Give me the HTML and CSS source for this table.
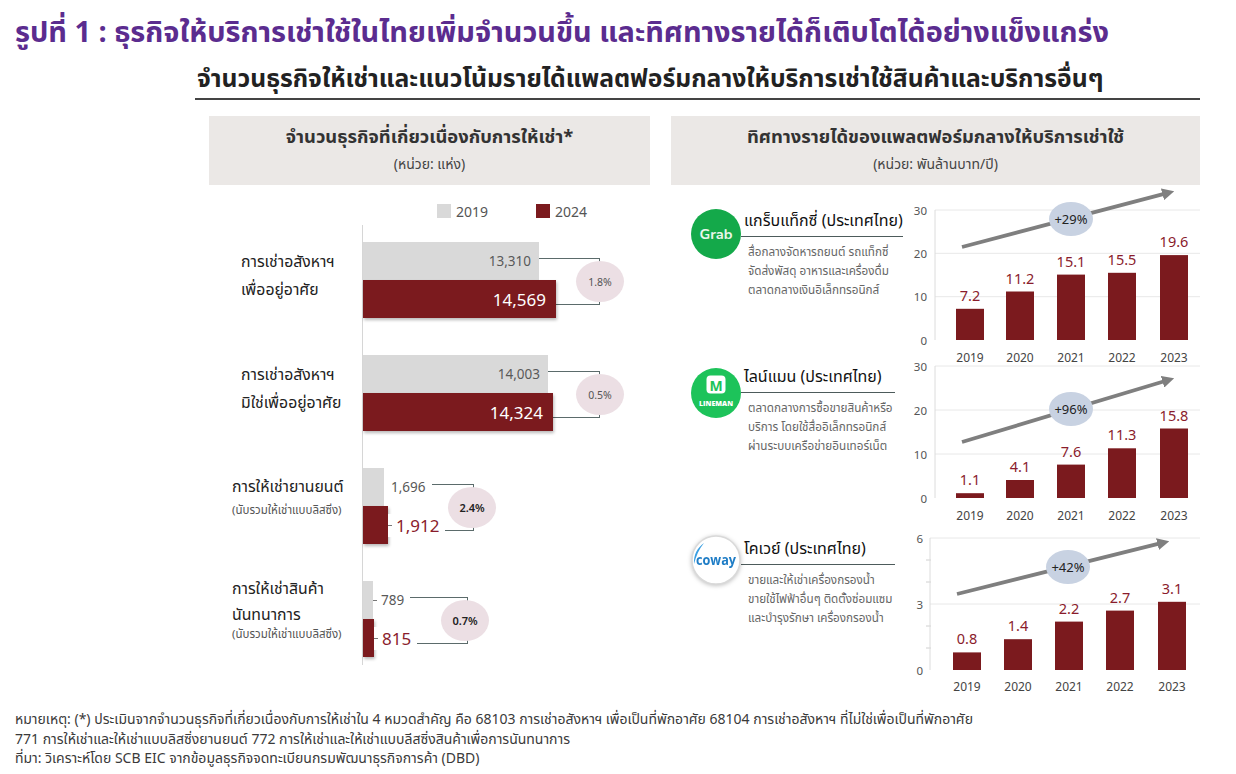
FILE: index.html
```
<!DOCTYPE html>
<html lang="th">
<head>
<meta charset="utf-8">
<title>รูปที่ 1</title>
<link rel="stylesheet" href="styles.css">
</head>
<body>
<div class="page">
  <h1 class="title">รูปที่ 1 : ธุรกิจให้บริการเช่าใช้ในไทยเพิ่มจำนวนขึ้น และทิศทางรายได้ก็เติบโตได้อย่างแข็งแกร่ง</h1>
  <div class="subhead"><h2>จำนวนธุรกิจให้เช่าและแนวโน้มรายได้แพลตฟอร์มกลางให้บริการเช่าใช้สินค้าและบริการอื่นๆ</h2></div>

  <div class="panels">
    <section class="panel left">
      <div class="phead">
        <div class="ph-title">จำนวนธุรกิจที่เกี่ยวเนื่องกับการให้เช่า*</div>
        <div class="ph-unit">(หน่วย: แห่ง)</div>
      </div>
      <div class="legend">
        <div class="lg-item first"><span class="sw sw19"></span>2019</div>
        <div class="lg-item"><span class="sw sw24"></span>2024</div>
      </div>
      <div class="hchart">
        <div class="hlabels">
          <div class="lab lab-a"><div class="lm">การเช่าอสังหาฯ</div><div class="lm">เพื่ออยู่อาศัย</div></div>
          <div class="lab lab-a"><div class="lm">การเช่าอสังหาฯ</div><div class="lm">มิใช่เพื่ออยู่อาศัย</div></div>
          <div class="lab lab-b"><div class="lm">การให้เช่ายานยนต์</div><div class="ls">(นับรวมให้เช่าแบบลิสซิ่ง)</div></div>
          <div class="lab lab-c"><div class="lm">การให้เช่าสินค้า</div><div class="lm">นันทนาการ</div><div class="ls">(นับรวมให้เช่าแบบลิสซิ่ง)</div></div>
        </div>
        <div class="hbars">
          <div class="grp">
            <div class="brow"><div class="bar b19" style="width:176px"><span class="vin g">13,310</span></div></div>
            <div class="brow"><div class="bar b24" style="width:193px"><span class="vin w">14,569</span></div></div>
            <div class="bracket" style="left:175px;width:62px"></div>
            <div class="pct" style="left:213px">1.8%</div>
          </div>
          <div class="grp">
            <div class="brow"><div class="bar b19" style="width:185px"><span class="vin g">14,003</span></div></div>
            <div class="brow"><div class="bar b24" style="width:190px"><span class="vin w">14,324</span></div></div>
            <div class="bracket" style="left:184px;width:53px"></div>
            <div class="pct" style="left:213px">0.5%</div>
          </div>
          <div class="grp">
            <div class="brow"><div class="bar b19" style="width:21px"></div><span class="vout g">1,696</span></div>
            <div class="brow"><div class="bar b24" style="width:25px"></div><span class="vout r tick">1,912</span></div>
            <div class="bracket" style="left:64px;width:47px"></div>
            <div class="pct strong" style="left:85px">2.4%</div>
          </div>
          <div class="grp last">
            <div class="brow"><div class="bar b19" style="width:10px"></div><span class="vout g tick">789</span></div>
            <div class="brow"><div class="bar b24" style="width:11px"></div><span class="vout r tick">815</span></div>
            <div class="bracket" style="left:44px;width:61px"></div>
            <div class="pct strong" style="left:78px">0.7%</div>
          </div>
        </div>
      </div>
    </section>

    <section class="panel right">
      <div class="phead">
        <div class="ph-title">ทิศทางรายได้ของแพลตฟอร์มกลางให้บริการเช่าใช้</div>
        <div class="ph-unit">(หน่วย: พันล้านบาท/ปี)</div>
      </div>
      <div class="rows">
        <div class="rrow r1">
          <div class="info">
            <svg class="logo" viewBox="0 0 50 50" width="50" height="50">
              <circle cx="25" cy="25" r="25" fill="#14a94a"/>
              <text x="25" y="29.5" text-anchor="middle" font-family="Nunito, 'Open Sans', sans-serif" font-size="13" font-weight="700" fill="#e9f7ea" textLength="33" lengthAdjust="spacingAndGlyphs">Grab</text>
            </svg>
            <div class="itext">
              <div class="iname">แกร็บแท็กซี่ (ประเทศไทย)</div>
              <div class="idesc">สื่อกลางจัดหารถยนต์ รถแท็กซี่<br>จัดส่งพัสดุ อาหารและเครื่องดื่ม<br>ตลาดกลางเงินอิเล็กทรอนิกส์</div>
            </div>
          </div>
          <svg class="vchart" width="300" height="156" viewBox="0 0 300 156">
            <defs><marker id="ah1" viewBox="0 0 10 10" refX="3" refY="5" markerWidth="3.2" markerHeight="3.2" orient="auto"><path d="M0,0 L10,5 L0,10 z" fill="#7f7f7f"/></marker></defs>
            <g class="grid"><line x1="35" y1="10" x2="300" y2="10"/><line x1="35" y1="53.3" x2="300" y2="53.3"/><line x1="35" y1="96.7" x2="300" y2="96.7"/></g>
            <line class="axis" x1="35" y1="10" x2="35" y2="140"/>
            <g class="ylab"><text x="27" y="14.5">30</text><text x="27" y="57.8">20</text><text x="27" y="101.2">10</text><text x="27" y="144.5">0</text></g>
            <g class="bars"><rect x="56" y="108.8" width="28" height="31.2"/><rect x="106" y="91.5" width="28" height="48.5"/><rect x="157" y="74.6" width="28" height="65.4"/><rect x="208" y="72.8" width="28" height="67.2"/><rect x="260" y="55.1" width="28" height="84.9"/></g>
            <g class="vals"><text x="70" y="100.8">7.2</text><text x="120" y="83.5">11.2</text><text x="171" y="66.6">15.1</text><text x="222" y="64.8">15.5</text><text x="274" y="47.1">19.6</text></g>
            <g class="years"><text x="70" y="162">2019</text><text x="120" y="162">2020</text><text x="171" y="162">2021</text><text x="222" y="162">2022</text><text x="274" y="162">2023</text></g>
            <line class="arrow" x1="62" y1="47" x2="266" y2="-6.6" marker-end="url(#ah1)"/>
            <ellipse class="bub" cx="171" cy="19" rx="22" ry="17"/>
            <text class="bubt" x="171" y="23.5">+29%</text>
          </svg>
        </div>

        <div class="rrow r2">
          <div class="info">
            <svg class="logo" viewBox="0 0 50 50" width="50" height="50">
              <circle cx="25" cy="25" r="25" fill="#1dc35a"/>
              <rect x="15.5" y="7.5" width="19" height="18" rx="4" fill="#ffffff"/>
              <text x="25" y="22.5" text-anchor="middle" font-family="'Open Sans', sans-serif" font-size="14" font-weight="700" fill="#1dc35a">M</text>
              <text x="25" y="37.5" text-anchor="middle" font-family="'Open Sans', sans-serif" font-size="6.4" font-weight="800" fill="#ffffff" textLength="34" lengthAdjust="spacingAndGlyphs">LINEMAN</text>
            </svg>
            <div class="itext">
              <div class="iname">ไลน์แมน (ประเทศไทย)</div>
              <div class="idesc">ตลาดกลางการซื้อขายสินค้าหรือ<br>บริการ โดยใช้สื่ออิเล็กทรอนิกส์<br>ผ่านระบบเครือข่ายอินเทอร์เน็ต</div>
            </div>
          </div>
          <svg class="vchart" width="300" height="172" viewBox="0 0 300 172">
            <defs><marker id="ah2" viewBox="0 0 10 10" refX="3" refY="5" markerWidth="3.2" markerHeight="3.2" orient="auto"><path d="M0,0 L10,5 L0,10 z" fill="#7f7f7f"/></marker></defs>
            <g class="grid"><line x1="35" y1="10" x2="300" y2="10"/><line x1="35" y1="54" x2="300" y2="54"/><line x1="35" y1="98" x2="300" y2="98"/></g>
            <line class="axis" x1="35" y1="10" x2="35" y2="142"/>
            <g class="ylab"><text x="27" y="14.5">30</text><text x="27" y="58.5">20</text><text x="27" y="102.5">10</text><text x="27" y="146.5">0</text></g>
            <g class="bars"><rect x="56" y="137.2" width="28" height="4.8"/><rect x="106" y="124" width="28" height="18"/><rect x="157" y="108.6" width="28" height="33.4"/><rect x="208" y="92.3" width="28" height="49.7"/><rect x="260" y="72.5" width="28" height="69.5"/></g>
            <g class="vals"><text x="70" y="129.2">1.1</text><text x="120" y="116">4.1</text><text x="171" y="100.6">7.6</text><text x="222" y="84.3">11.3</text><text x="274" y="64.5">15.8</text></g>
            <g class="years"><text x="70" y="164">2019</text><text x="120" y="164">2020</text><text x="171" y="164">2021</text><text x="222" y="164">2022</text><text x="274" y="164">2023</text></g>
            <line class="arrow" x1="62" y1="86" x2="266" y2="24.7" marker-end="url(#ah2)"/>
            <ellipse class="bub" cx="171" cy="53" rx="22" ry="17"/>
            <text class="bubt" x="171" y="57.5">+96%</text>
          </svg>
        </div>

        <div class="rrow r3">
          <div class="info">
            <svg class="logo" viewBox="0 0 50 50" width="50" height="50">
              <circle cx="25" cy="25" r="24" fill="#ffffff" stroke="#d9d9d9" stroke-width="1.5"/>
              <path d="M13 8 C6 13 2.5 20 3 29 C5 21 8 14 13 8 Z" fill="#3a9fe2"/>
              <text x="25" y="30" text-anchor="middle" font-family="'Open Sans', sans-serif" font-size="14" font-weight="700" fill="#1f7dc6" textLength="40" lengthAdjust="spacingAndGlyphs">coway</text>
            </svg>
            <div class="itext">
              <div class="iname">โคเวย์ (ประเทศไทย)</div>
              <div class="idesc">ขายและให้เช่าเครื่องกรองน้ำ<br>ขายใช้ไฟฟ้าอื่นๆ ติดตั้งซ่อมแซม<br>และบำรุงรักษา เครื่องกรองน้ำ</div>
            </div>
          </div>
          <svg class="vchart" width="300" height="172" viewBox="0 0 300 172">
            <defs><marker id="ah3" viewBox="0 0 10 10" refX="3" refY="5" markerWidth="3.2" markerHeight="3.2" orient="auto"><path d="M0,0 L10,5 L0,10 z" fill="#7f7f7f"/></marker></defs>
            <g class="grid"><line x1="30" y1="10" x2="300" y2="10"/><line x1="30" y1="76" x2="300" y2="76"/></g>
            <g class="ticks"><line x1="26" y1="32" x2="31" y2="32"/><line x1="26" y1="54" x2="31" y2="54"/><line x1="26" y1="98" x2="31" y2="98"/><line x1="26" y1="120" x2="31" y2="120"/></g>
            <line class="axis" x1="30" y1="10" x2="30" y2="142"/>
            <g class="ylab"><text x="23" y="14.5">6</text><text x="23" y="80.5">3</text><text x="23" y="146.5">0</text></g>
            <g class="bars"><rect x="53" y="124.4" width="28" height="17.6"/><rect x="104" y="111.2" width="28" height="30.8"/><rect x="155" y="93.6" width="28" height="48.4"/><rect x="206" y="82.6" width="28" height="59.4"/><rect x="258" y="73.8" width="28" height="68.2"/></g>
            <g class="vals"><text x="67" y="116.4">0.8</text><text x="118" y="103.2">1.4</text><text x="169" y="85.6">2.2</text><text x="220" y="74.6">2.7</text><text x="272" y="65.8">3.1</text></g>
            <g class="years"><text x="67" y="163">2019</text><text x="118" y="163">2020</text><text x="169" y="163">2021</text><text x="220" y="163">2022</text><text x="272" y="163">2023</text></g>
            <line class="arrow" x1="57" y1="66" x2="261" y2="15.2" marker-end="url(#ah3)"/>
            <ellipse class="bub" cx="168" cy="39" rx="22" ry="17"/>
            <text class="bubt" x="168" y="43.5">+42%</text>
          </svg>
        </div>
      </div>
    </section>
  </div>

  <footer class="notes">
    <p>หมายเหตุ: (*) ประเมินจากจำนวนธุรกิจที่เกี่ยวเนื่องกับการให้เช่าใน 4 หมวดสำคัญ คือ 68103 การเช่าอสังหาฯ เพื่อเป็นที่พักอาศัย 68104 การเช่าอสังหาฯ ที่ไม่ใช่เพื่อเป็นที่พักอาศัย</p>
    <p>771 การให้เช่าและให้เช่าแบบลิสซิ่งยานยนต์ 772 การให้เช่าและให้เช่าแบบลีสซิ่งสินค้าเพื่อการนันทนาการ</p>
    <p>ที่มา: วิเคราะห์โดย SCB EIC จากข้อมูลธุรกิจจดทะเบียนกรมพัฒนาธุรกิจการค้า (DBD)</p>
  </footer>
</div>
</body>
</html>
```

FILE: styles.css
```
* { box-sizing: border-box; }
html, body { margin: 0; padding: 0; background: #ffffff; }
body {
  font-family: "Noto Sans Thai", "Noto Sans Thai Looped", "Noto Sans", "DejaVu Sans", sans-serif;
  color: #222;
}
.page { width: 1236px; height: 774px; overflow: hidden; }

.title {
  margin: 0;
  padding: 14px 0 0 15px;
  font-size: 28.9px;
  line-height: 38px;
  font-weight: 700;
  color: #5b2c8f;
  white-space: nowrap;
}
.subhead {
  margin: 10px 0 0 195px;
  width: 1005px;
  border-bottom: 2px solid #444;
}
.subhead h2 {
  margin: 0;
  padding-left: 2px;
  font-size: 24.7px;
  line-height: 36px;
  font-weight: 700;
  color: #222;
  white-space: nowrap;
}

.panels { display: flex; gap: 21px; margin: 16px 0 0 209px; height: 584px; }
.left { width: 441px; }
.right { width: 529px; }

.phead { background: #ebe8e6; height: 69px; text-align: center; padding-top: 9px; }
.ph-title { font-size: 18.4px; line-height: 24px; font-weight: 700; color: #333; white-space: nowrap; }
.ph-unit { font-size: 14px; line-height: 18px; margin-top: 7px; color: #444; }

/* legend */
.legend { display: flex; align-items: center; height: 40px; padding: 12px 0 0 228px; }
.lg-item { display: flex; align-items: center; gap: 5px; font-family: "Noto Sans", sans-serif; font-size: 14px; color: #555; }
.lg-item.first { width: 99px; }
.sw { width: 14px; height: 14px; display: inline-block; }
.sw19 { background: #d9d9d9; }
.sw24 { background: #7b1a1e; }

/* horizontal bar chart */
.hchart { display: flex; height: 440px; }
.hlabels { width: 153px; padding-top: 17px; }
.lab { height: 113px; }
.lab-a { padding: 6px 0 0 32px; }
.lab-b { padding: 5px 0 0 23px; }
.lab-c { padding: 0 0 0 23px; margin-top: -5px; }
.lm { font-size: 15.8px; line-height: 28px; color: #222; white-space: nowrap; }
.lab-c .lm { line-height: 26px; }
.ls { font-size: 11.5px; line-height: 20px; color: #555; white-space: nowrap; }
.lab-c .ls { line-height: 14px; }

.hbars { flex: 1; border-left: 1px solid #d6d6d6; padding-top: 17px; }
.grp { height: 113px; position: relative; }
.grp.last { height: 85px; }
.brow { display: flex; align-items: center; height: 38px; position: relative; z-index: 2; }
.bar { height: 38px; display: flex; align-items: center; justify-content: flex-end; flex-shrink: 0; }
.b19 { background: #d9d9d9; }
.b24 { background: #7b1a1e; box-shadow: 1px 2px 3px rgba(0,0,0,0.28); }
.vin { font-family: "Noto Sans", sans-serif; padding-right: 8px; white-space: nowrap; }
.vin.g { font-size: 13.5px; color: #595959; }
.vin.w { font-size: 17px; color: #ffffff; padding-right: 10px; }
.vout { font-family: "Noto Sans", sans-serif; background: #fff; padding: 0 6px 0 7px; white-space: nowrap; display: flex; align-items: center; }
.vout.g { font-size: 13.5px; color: #595959; }
.vout.r { font-size: 17px; color: #8a1c2c; }
.vout.tick { padding-left: 0; }
.vout.tick::before { content: ""; width: 4px; height: 1px; background: #777; margin-right: 4px; }

.bracket {
  position: absolute;
  top: 16px;
  height: 47px;
  border: 1.5px solid #5b6b6b;
  border-left: none;
  z-index: 1;
}
.pct {
  position: absolute;
  top: 19px;
  width: 48px;
  height: 41px;
  border-radius: 50%;
  background: #ecdfe4;
  z-index: 3;
  display: flex;
  align-items: center;
  justify-content: center;
  font-family: "Noto Sans", sans-serif;
  font-size: 10.5px;
  color: #555;
}
.pct.strong { color: #222; font-weight: 600; font-size: 11px; }

/* right side */
.rows { margin-top: 15px; }
.rrow { display: flex; }
.r1 { height: 156px; }
.r2, .r3 { height: 172px; }
.info { width: 229px; display: flex; padding-left: 20px; }
.logo { flex-shrink: 0; margin-top: 9px; display: block; }
.r2 .logo { margin-top: 12px; }
.r3 .logo { margin-top: 7px; filter: drop-shadow(0 1px 2px rgba(0,0,0,0.25)); }
.itext { flex: 1; margin: 10px 5px 0 0; }
.iname {
  font-size: 16px;
  line-height: 22px;
  padding: 0 0 4px 3px;
  border-bottom: 1.5px solid #4d5b5b;
  color: #111;
  white-space: nowrap;
}
.idesc { font-size: 11.7px; line-height: 19px; color: #666; padding-left: 7px; margin-top: 6px; white-space: nowrap; }

.vchart { display: block; overflow: visible; flex-shrink: 0; }
.vchart .grid line { stroke: #e8e8e8; stroke-width: 1; }
.vchart .ticks line { stroke: #d0d0d0; stroke-width: 1; }
.vchart .axis { stroke: #dcdcdc; stroke-width: 1; }
.vchart .ylab text { font-family: "Noto Sans", sans-serif; font-size: 11.5px; fill: #555; text-anchor: end; }
.vchart .bars rect { fill: #7b1a1e; }
.vchart .vals text { font-family: "Noto Sans", sans-serif; font-size: 14.5px; fill: #8a1c2c; text-anchor: middle; }
.vchart .years text { font-family: "Noto Sans", sans-serif; font-size: 12px; fill: #444; text-anchor: middle; }
.vchart .arrow { stroke: #7f7f7f; stroke-width: 3.8; }
.vchart .bub { fill: #c8d2e2; }
.vchart .bubt { font-family: "Noto Sans", sans-serif; font-size: 13px; fill: #222; text-anchor: middle; }

.notes { margin-top: 10px; padding-left: 15px; }
.notes p { margin: 0; font-size: 14px; line-height: 19.5px; color: #3a3a3a; white-space: nowrap; }
```
